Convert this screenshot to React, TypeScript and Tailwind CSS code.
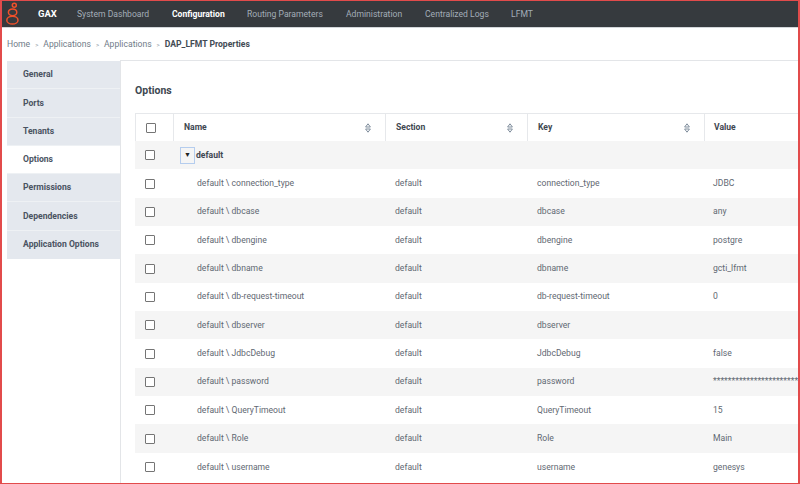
import React from "react";

const navItems: { label: string; w: string; active?: boolean }[] = [
  { label: "System Dashboard", w: "w-[95px]" },
  { label: "Configuration", w: "w-[75px]", active: true },
  { label: "Routing Parameters", w: "w-[99px]" },
  { label: "Administration", w: "w-[79px]" },
  { label: "Centralized Logs", w: "w-[86px]" },
  { label: "LFMT", w: "w-[60px]" },
];

const sideItems = [
  "General",
  "Ports",
  "Tenants",
  "Options",
  "Permissions",
  "Dependencies",
  "Application Options",
];

const rows: [string, string][] = [
  ["connection_type", "JDBC"],
  ["dbcase", "any"],
  ["dbengine", "postgre"],
  ["dbname", "gcti_lfmt"],
  ["db-request-timeout", "0"],
  ["dbserver", ""],
  ["JdbcDebug", "false"],
  ["password", "****************************************"],
  ["QueryTimeout", "15"],
  ["Role", "Main"],
  ["username", "genesys"],
];

function Logo() {
  return (
    <svg width="16" height="24" viewBox="0 0 16 24" fill="none" stroke="#f0502a" strokeWidth="1.5">
      <circle cx="11.3" cy="3.2" r="2" />
      <ellipse cx="9.6" cy="10.3" rx="4.2" ry="3.4" />
      <ellipse cx="9.4" cy="18.2" rx="5.6" ry="3.9" />
    </svg>
  );
}

function SortIcon() {
  return (
    <svg width="6" height="10" viewBox="0 0 6 10" fill="none" stroke="#7f8d9c" strokeWidth="1">
      <path d="M3 0.8 L5.4 4 H0.6 Z" />
      <path d="M0.6 6 H5.4 L3 9.2 Z" />
    </svg>
  );
}

function Checkbox() {
  return <div className="w-[10px] h-[10px] border-[1.5px] border-[#757575] rounded-[1px] bg-white" />;
}

export default function App() {
  return (
    <div className="w-[800px] h-[484px] overflow-hidden bg-white border-l-2 border-r-2 border-t border-b border-[#e24b4b] flex flex-col font-['Roboto','Liberation_Sans',sans-serif]">
      {/* Top nav */}
      <div className="h-[26px] shrink-0 bg-[#363a3e] flex items-center">
        <div className="w-[36px] pl-[1px] flex items-center">
          <Logo />
        </div>
        <div className="w-[39px] text-[9.5px] font-bold text-white">GAX</div>
        {navItems.map((n) => (
          <div
            key={n.label}
            className={`${n.w} shrink-0 text-[8.6px] whitespace-nowrap ${
              n.active ? "font-bold text-white" : "text-[#a3adb8]"
            }`}
          >
            {n.label}
          </div>
        ))}
      </div>
      <div className="h-px shrink-0 bg-[#d3d6da]" />

      {/* Breadcrumb */}
      <div className="h-[32px] shrink-0 flex items-center pl-[5px] gap-[5px] text-[8.6px] text-[#6f7b88]">
        <span>Home</span>
        <span className="text-[6px] text-[#8a949e]">&gt;</span>
        <span>Applications</span>
        <span className="text-[6px] text-[#8a949e]">&gt;</span>
        <span>Applications</span>
        <span className="text-[6px] text-[#8a949e]">&gt;</span>
        <span className="font-bold text-[#434b54]">DAP_LFMT Properties</span>
      </div>

      {/* Main */}
      <div className="flex-1 flex min-h-0">
        {/* Sidebar */}
        <div className="w-[118px] shrink-0 pl-[5px] pt-px">
          <div className="w-[113px] bg-[#e4e8ee]">
            {sideItems.map((s, i) => (
              <div
                key={s}
                className={`h-[28.3px] flex items-center pl-[16px] text-[8.6px] font-bold ${
                  i < sideItems.length - 1 ? "border-b border-[#eef1f4]" : ""
                } ${s === "Options" ? "bg-white text-[#4a5361]" : "text-[#4a5361]"}`}
              >
                {s}
              </div>
            ))}
          </div>
        </div>

        {/* Content */}
        <div className="flex-1 min-w-0 border-l border-t border-[#e3e5e8] pl-[14px] overflow-hidden">
          <div className="h-[52px] flex items-center pt-[8px] text-[10.5px] font-bold text-[#3e4751]">
            Options
          </div>
          <div className="w-[820px]">
            {/* Header */}
            <div className="h-[28px] flex border-t border-l border-[#e6e8eb] text-[8.6px] font-bold text-[#3e4751]">
              <div className="w-[38px] shrink-0 flex items-center pl-[10px] border-r border-[#e6e8eb]">
                <Checkbox />
              </div>
              <div className="w-[212px] shrink-0 flex items-center justify-between pl-[10px] pr-[14px] border-r border-[#e6e8eb]">
                <span>Name</span>
                <SortIcon />
              </div>
              <div className="w-[142px] shrink-0 flex items-center justify-between pl-[10px] pr-[14px] border-r border-[#e6e8eb]">
                <span>Section</span>
                <SortIcon />
              </div>
              <div className="w-[177px] shrink-0 flex items-center justify-between pl-[10px] pr-[14px] border-r border-[#e6e8eb]">
                <span>Key</span>
                <SortIcon />
              </div>
              <div className="flex-1 flex items-center pl-[9px]">
                <span>Value</span>
              </div>
            </div>

            {/* Group row */}
            <div className="h-[28.35px] flex bg-[#f5f5f5] text-[8.6px]">
              <div className="w-[38px] shrink-0 flex items-center pl-[10px]">
                <Checkbox />
              </div>
              <div className="w-[212px] shrink-0 flex items-center pl-[7px]">
                <div className="w-[15px] h-[17px] border-[1.5px] border-[#b5cdee] flex items-center justify-center text-[7px] text-[#222]">
                  ▼
                </div>
                <span className="ml-[1px] font-bold text-[#3e4751]">default</span>
              </div>
            </div>

            {rows.map(([k, v], i) => (
              <div
                key={k}
                className={`h-[28.35px] flex text-[8.6px] text-[#5f6872] ${
                  i % 2 === 1 ? "bg-[#f5f5f5]" : "bg-white"
                }`}
              >
                <div className="w-[38px] shrink-0 flex items-center pl-[10px]">
                  <Checkbox />
                </div>
                <div className="w-[212px] shrink-0 flex items-center pl-[24px] whitespace-nowrap">
                  default \ {k}
                </div>
                <div className="w-[142px] shrink-0 flex items-center pl-[10px]">default</div>
                <div className="w-[177px] shrink-0 flex items-center pl-[10px]">{k}</div>
                <div className="flex-1 flex items-center pl-[9px] whitespace-nowrap">{v}</div>
              </div>
            ))}
          </div>
        </div>
      </div>
    </div>
  );
}
